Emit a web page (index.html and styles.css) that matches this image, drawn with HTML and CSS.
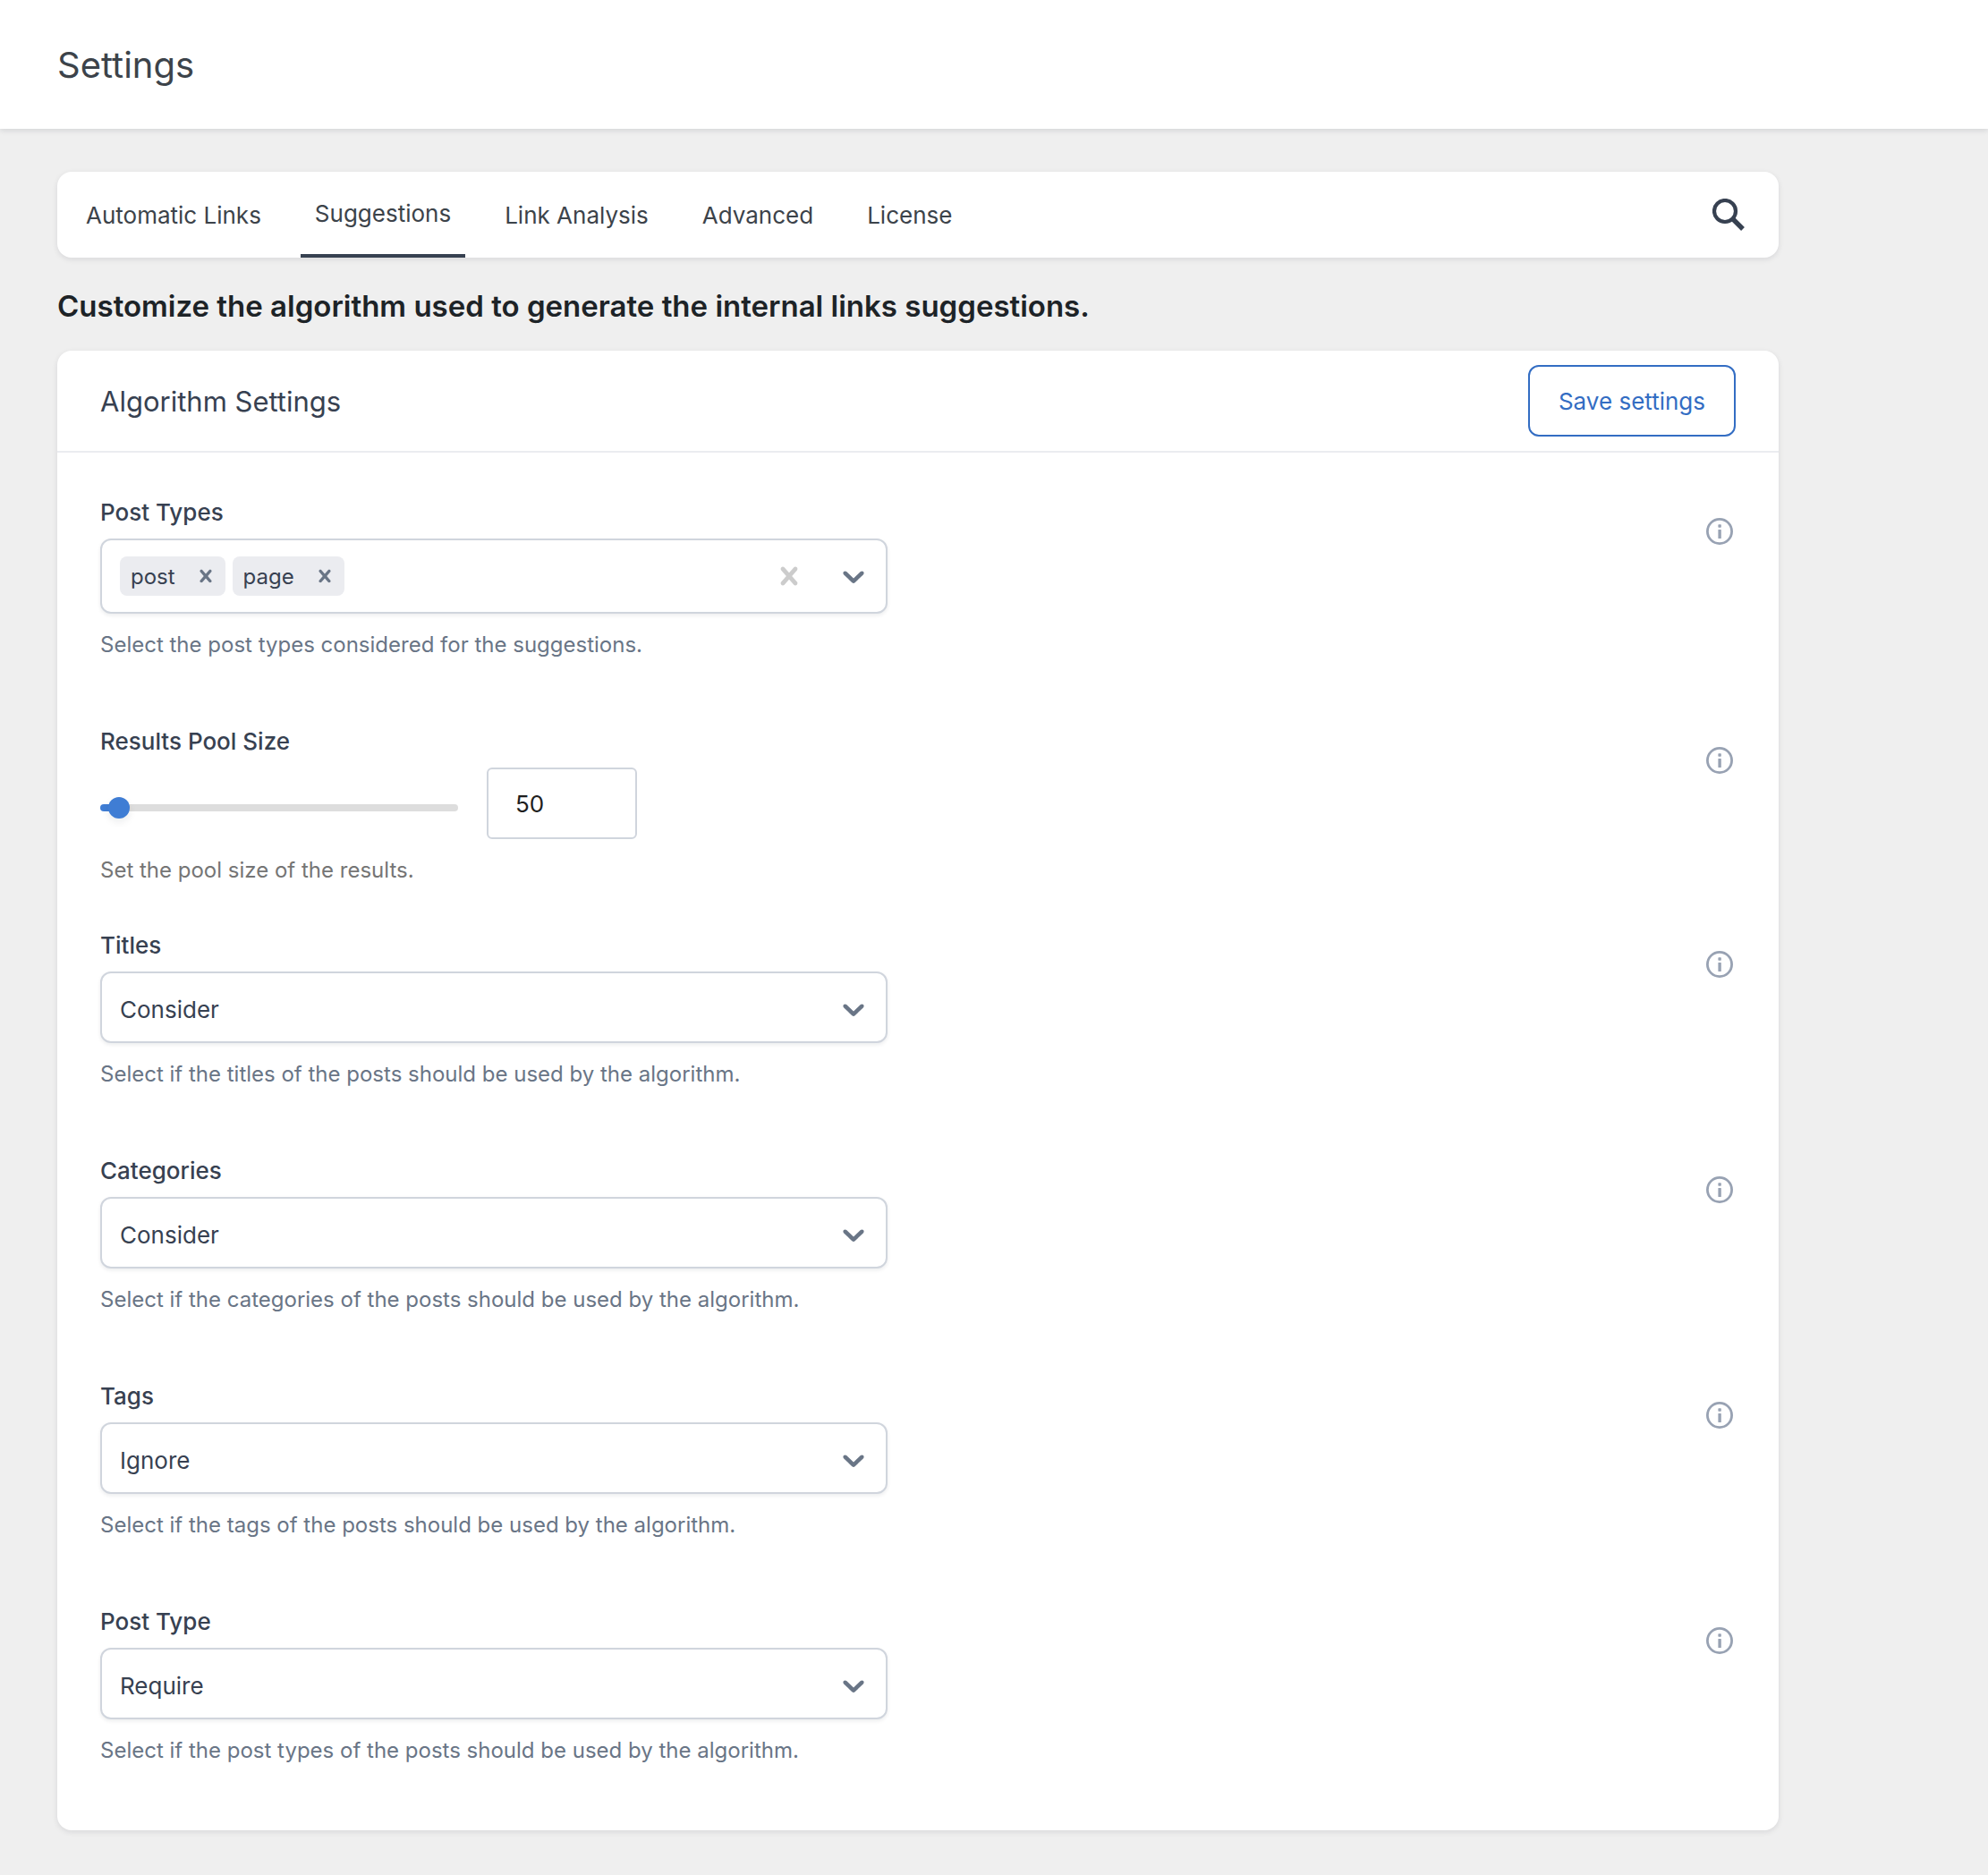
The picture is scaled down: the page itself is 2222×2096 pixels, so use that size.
FILE: index.html
```html
<!DOCTYPE html>
<html lang="en">
<head>
    <meta charset="utf-8">
    <title>Settings</title>
    <link rel="stylesheet" href="styles.css">
</head>
<body>
<!-- shared icons -->
<svg class="icon-defs" aria-hidden="true">
    <symbol id="icon-chevron" viewBox="0 0 20 20">
        <path d="M4.516 7.548c0.436-0.446 1.043-0.481 1.576 0l3.908 3.747 3.908-3.747c0.533-0.481 1.141-0.446 1.574 0 0.436 0.445 0.408 1.197 0 1.615-0.406 0.418-4.695 4.502-4.695 4.502-0.217 0.223-0.502 0.335-0.787 0.335s-0.57-0.112-0.789-0.335c0 0-4.287-4.084-4.695-4.502s-0.436-1.17 0-1.615z"/>
    </symbol>
    <symbol id="icon-cross" viewBox="0 0 20 20">
        <path d="M14.348 14.849c-0.469 0.469-1.229 0.469-1.697 0l-2.651-3.030-2.651 3.029c-0.469 0.469-1.229 0.469-1.697 0-0.469-0.469-0.469-1.229 0-1.697l2.758-3.15-2.759-3.152c-0.469-0.469-0.469-1.228 0-1.697s1.228-0.469 1.697 0l2.652 3.031 2.651-3.031c0.469-0.469 1.228-0.469 1.697 0s0.469 1.229 0 1.697l-2.758 3.152 2.758 3.15c0.469 0.469 0.469 1.229 0 1.698z"/>
    </symbol>
    <symbol id="icon-info" viewBox="0 0 36 36">
        <circle cx="18" cy="18" r="13.6" fill="none" stroke="currentColor" stroke-width="2.8"/>
        <rect x="16.4" y="10.3" width="3.4" height="3.4" rx="0.6"/>
        <rect x="16.4" y="16" width="3.4" height="10" rx="0.6"/>
    </symbol>
</svg>

<header class="page-header">
    <h1>Settings</h1>
</header>

<main class="content">
    <nav class="tabs">
        <a class="tab" href="#automatic-links">Automatic Links</a>
        <a class="tab active" href="#suggestions" aria-current="page">Suggestions</a>
        <a class="tab" href="#link-analysis">Link Analysis</a>
        <a class="tab" href="#advanced">Advanced</a>
        <a class="tab" href="#license">License</a>
        <button class="search-button" type="button" aria-label="Search">
            <svg viewBox="0 0 36 36"><circle cx="14" cy="14" r="12" fill="none" stroke="currentColor" stroke-width="4.2"/><path d="M22 22L34 34" stroke="currentColor" stroke-width="5.4"/></svg>
        </button>
    </nav>

    <h2 class="intro">Customize the algorithm used to generate the internal links suggestions.</h2>

    <form class="card">
        <div class="card-header">
            <h3>Algorithm Settings</h3>
            <button class="save-button" type="submit">Save settings</button>
        </div>
        <div class="card-body">
            <div class="field">
                <div class="field-main">
                    <label for="post-types">Post Types</label>
                    <div class="multi-select">
                        <span class="chip">post<button type="button" aria-label="Remove post"><svg><use href="#icon-cross"/></svg></button></span>
                        <span class="chip">page<button type="button" aria-label="Remove page"><svg><use href="#icon-cross"/></svg></button></span>
                        <input id="post-types" type="text" autocomplete="off">
                        <button class="clear-button" type="button" aria-label="Clear all"><svg><use href="#icon-cross"/></svg></button>
                        <button class="open-button" type="button" aria-label="Open list"><svg><use href="#icon-chevron"/></svg></button>
                    </div>
                    <p class="help">Select the post types considered for the suggestions.</p>
                </div>
                <button class="info-button" type="button" aria-label="About Post Types"><svg><use href="#icon-info"/></svg></button>
            </div>

            <div class="field field-range">
                <div class="field-main">
                    <label for="pool-size">Results Pool Size</label>
                    <div class="range-row">
                        <input id="pool-size" class="range" type="range" min="0" max="2000" value="50" style="--fill: 5%">
                        <input class="number" type="number" value="50" aria-label="Results Pool Size value">
                    </div>
                    <p class="help">Set the pool size of the results.</p>
                </div>
                <button class="info-button" type="button" aria-label="About Results Pool Size"><svg><use href="#icon-info"/></svg></button>
            </div>

            <div class="field">
                <div class="field-main">
                    <label for="titles">Titles</label>
                    <div class="select">
                        <select id="titles"><option>Ignore</option><option selected>Consider</option><option>Require</option></select>
                        <svg><use href="#icon-chevron"/></svg>
                    </div>
                    <p class="help">Select if the titles of the posts should be used by the algorithm.</p>
                </div>
                <button class="info-button" type="button" aria-label="About Titles"><svg><use href="#icon-info"/></svg></button>
            </div>

            <div class="field">
                <div class="field-main">
                    <label for="categories">Categories</label>
                    <div class="select">
                        <select id="categories"><option>Ignore</option><option selected>Consider</option><option>Require</option></select>
                        <svg><use href="#icon-chevron"/></svg>
                    </div>
                    <p class="help">Select if the categories of the posts should be used by the algorithm.</p>
                </div>
                <button class="info-button" type="button" aria-label="About Categories"><svg><use href="#icon-info"/></svg></button>
            </div>

            <div class="field">
                <div class="field-main">
                    <label for="tags">Tags</label>
                    <div class="select">
                        <select id="tags"><option selected>Ignore</option><option>Consider</option><option>Require</option></select>
                        <svg><use href="#icon-chevron"/></svg>
                    </div>
                    <p class="help">Select if the tags of the posts should be used by the algorithm.</p>
                </div>
                <button class="info-button" type="button" aria-label="About Tags"><svg><use href="#icon-info"/></svg></button>
            </div>

            <div class="field">
                <div class="field-main">
                    <label for="post-type">Post Type</label>
                    <div class="select">
                        <select id="post-type"><option>Ignore</option><option>Consider</option><option selected>Require</option></select>
                        <svg><use href="#icon-chevron"/></svg>
                    </div>
                    <p class="help">Select if the post types of the posts should be used by the algorithm.</p>
                </div>
                <button class="info-button" type="button" aria-label="About Post Type"><svg><use href="#icon-info"/></svg></button>
            </div>
        </div>
    </form>
</main>
</body>
</html>
```
FILE: styles.css
```css
* {
    box-sizing: border-box;
    margin: 0;
    padding: 0;
}
body {
    background: #efefef;
    color: #374151;
    font-family: Inter, "Liberation Sans", sans-serif;
    font-size: 26px;
}
button, input, select {
    font: inherit;
    color: inherit;
}
button {
    border: 0;
    background: none;
    cursor: pointer;
}
svg {
    display: block;
    fill: currentColor;
}
.icon-defs {
    display: none;
}

/* header */
.page-header {
    display: flex;
    align-items: center;
    height: 144px;
    padding: 0 64px;
    background: #fff;
    box-shadow: 0 2px 6px rgba(16, 24, 40, 0.12);
}
.page-header h1 {
    color: #3c434a;
    font-size: 40px;
    font-weight: 400;
}
.content {
    max-width: 2052px;
    padding: 48px 64px 50px;
}

/* tabs */
.tabs {
    display: flex;
    gap: 28px;
    height: 96px;
    padding: 0 38px 0 16px;
    border-radius: 16px;
    background: #fff;
    box-shadow: 0 2px 6px rgba(16, 24, 40, 0.1);
}
.tab {
    display: flex;
    align-items: center;
    padding: 0 16px;
    color: #3c434a;
    text-decoration: none;
}
.tab.active {
    border-bottom: 4px solid #374151;
}
.search-button {
    margin-left: auto;
}
.search-button svg {
    width: 36px;
    height: 36px;
}
.intro {
    padding: 32px 0 28px;
    color: #1d2327;
    font-size: 33px;
    font-weight: 600;
    line-height: 44px;
}

/* card */
.card {
    border-radius: 16px;
    background: #fff;
    box-shadow: 0 2px 6px rgba(16, 24, 40, 0.1);
}
.card-header {
    display: flex;
    align-items: center;
    justify-content: space-between;
    padding: 16px 48px;
    border-bottom: 2px solid #ebecf0;
}
.card-header h3 {
    font-size: 31px;
    font-weight: 400;
}
.save-button {
    height: 80px;
    padding: 0 32px;
    border: 2px solid #336dc3;
    border-radius: 12px;
    color: #336dc3;
}
.card-body {
    padding: 48px 48px 0;
}

/* fields */
.field {
    display: flex;
    justify-content: space-between;
    padding-bottom: 70px;
}
.field-range {
    padding-bottom: 46px;
}
.field-main {
    width: 880px;
}
.field label {
    display: block;
    margin-bottom: 10px;
    font-weight: 500;
    line-height: 38px;
}
.help {
    margin-top: 16px;
    color: #697586;
    font-size: 24px;
    line-height: 38px;
}
.field-range .help {
    color: #757575;
}
.info-button {
    align-self: flex-start;
    margin-top: 22px;
    color: #98a2b3;
}
.info-button svg {
    width: 36px;
    height: 36px;
}

/* select boxes */
.multi-select, .select select {
    border: 2px solid #d0d5dd;
    border-radius: 12px;
    background: #fff;
    box-shadow: 0 2px 4px rgba(16, 24, 40, 0.08);
}
.multi-select {
    display: flex;
    align-items: center;
    gap: 8px;
    height: 84px;
    padding: 0 16px 0 20px;
}
.multi-select input {
    flex: 1;
    min-width: 0;
    border: 0;
    outline: 0;
    background: none;
}
.chip {
    display: flex;
    align-items: center;
    height: 44px;
    padding-left: 12px;
    border-radius: 8px;
    background: #ebecf0;
    font-size: 24px;
}
.chip button {
    padding: 8px;
    margin-left: 12px;
    color: #697586;
}
.chip svg {
    width: 28px;
    height: 28px;
}
.clear-button {
    margin-right: 24px;
    color: #ccc;
}
.open-button {
    color: #697586;
}
.multi-select > button svg, .select svg {
    width: 40px;
    height: 40px;
}
.select {
    display: grid;
    align-items: center;
}
.select select, .select svg {
    grid-area: 1 / 1;
}
.select select {
    height: 80px;
    padding: 4px 72px 0 20px;
    appearance: none;
}
.select svg {
    justify-self: end;
    margin: 4px 18px 0 0;
    color: #697586;
    pointer-events: none;
}

/* range */
.range-row {
    display: flex;
    align-items: center;
    gap: 32px;
}
.range {
    width: 400px;
    height: 24px;
    margin-top: 10px;
    background: none;
    appearance: none;
}
.range::-webkit-slider-runnable-track {
    height: 8px;
    border-radius: 4px;
    background: linear-gradient(to right, #3f7dd4 var(--fill), #ddd var(--fill));
}
.range::-webkit-slider-thumb {
    width: 24px;
    height: 24px;
    margin-top: -8px;
    border-radius: 50%;
    background: #3f7dd4;
    box-shadow: 0 4px 8px rgba(16, 24, 40, 0.08);
    appearance: none;
}
.number {
    width: 168px;
    height: 80px;
    padding: 0 30px;
    border: 2px solid #d0d5dd;
    border-radius: 6px;
    color: #1e1e1e;
}
```
